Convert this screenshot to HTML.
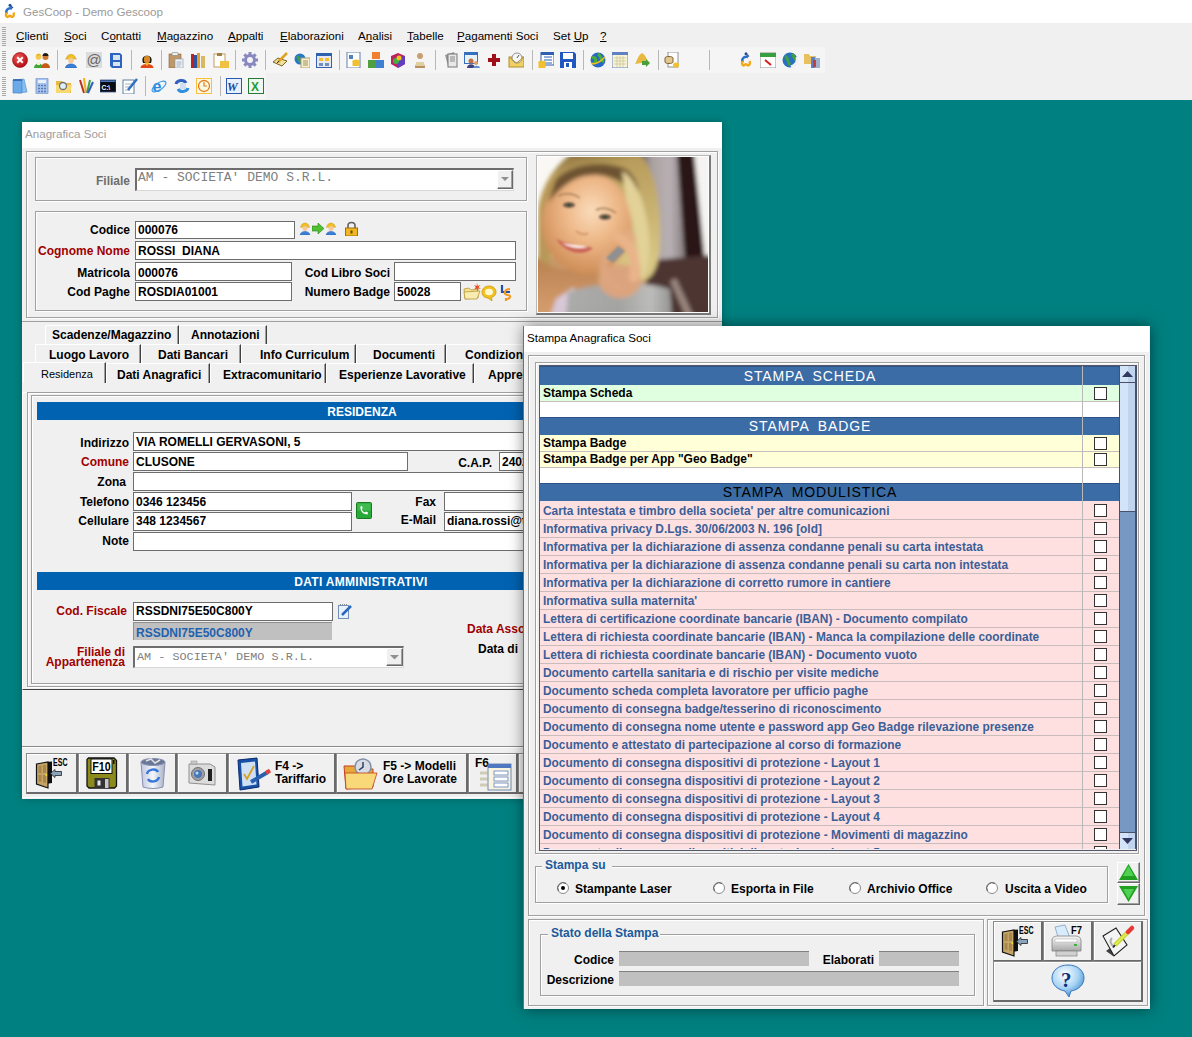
<!DOCTYPE html><html><head><meta charset="utf-8"><style>
html,body{margin:0;padding:0;}
#r{position:relative;width:1192px;height:1037px;overflow:hidden;background:#008080;font-family:'Liberation Sans',sans-serif;}
.a{position:absolute;box-sizing:content-box;}
.t{white-space:pre;}
u{text-decoration:underline;text-underline-offset:1px;}
</style></head><body><div id="r">
<div class="a" style="left:0px;top:0px;width:1192px;height:23px;background:#fff"></div>
<svg class="a" style="left:2px;top:3px" width="16" height="17" viewBox="0 0 16 16"><circle cx="8" cy="1.8" r="1.5" fill="#1f4f9f"/><path d="M8 2 L11 4.5" stroke="#1f4f9f" stroke-width="1.2"/><path d="M10 5 C5 4 3 8 5 10.5" stroke="#2a70c8" stroke-width="2.4" fill="none"/><path d="M4.5 9 C3 12 5 15 7 12.5 C8.5 11 9.5 15 11.5 12.5 C12 11.5 12 10 11.5 9" stroke="#f0a818" stroke-width="2.4" fill="none"/></svg>
<div class="a t" style="left:23px;top:5px;font-size:11.6px;line-height:14px;font-weight:normal;color:#9a9a9a;">GesCoop - Demo Gescoop</div>
<div class="a" style="left:0px;top:23px;width:1192px;height:77px;background:#f0f0f0"></div>
<div class="a" style="left:0px;top:47px;width:825px;height:26px;background:#f5f5f5"></div>
<div class="a" style="left:0px;top:73px;width:266px;height:26px;background:#f5f5f5"></div>
<svg class="a" style="left:2px;top:27px" width="4" height="20" viewBox="0 0 4 20"><rect x="0" y="0" width="4" height="1" fill="#a8a8a8"/><rect x="0" y="2" width="4" height="1" fill="#a8a8a8"/><rect x="0" y="4" width="4" height="1" fill="#a8a8a8"/><rect x="0" y="6" width="4" height="1" fill="#a8a8a8"/><rect x="0" y="8" width="4" height="1" fill="#a8a8a8"/><rect x="0" y="10" width="4" height="1" fill="#a8a8a8"/><rect x="0" y="12" width="4" height="1" fill="#a8a8a8"/><rect x="0" y="14" width="4" height="1" fill="#a8a8a8"/><rect x="0" y="16" width="4" height="1" fill="#a8a8a8"/><rect x="0" y="18" width="4" height="1" fill="#a8a8a8"/></svg>
<svg class="a" style="left:2px;top:51px" width="4" height="20" viewBox="0 0 4 20"><rect x="0" y="0" width="4" height="1" fill="#a8a8a8"/><rect x="0" y="2" width="4" height="1" fill="#a8a8a8"/><rect x="0" y="4" width="4" height="1" fill="#a8a8a8"/><rect x="0" y="6" width="4" height="1" fill="#a8a8a8"/><rect x="0" y="8" width="4" height="1" fill="#a8a8a8"/><rect x="0" y="10" width="4" height="1" fill="#a8a8a8"/><rect x="0" y="12" width="4" height="1" fill="#a8a8a8"/><rect x="0" y="14" width="4" height="1" fill="#a8a8a8"/><rect x="0" y="16" width="4" height="1" fill="#a8a8a8"/><rect x="0" y="18" width="4" height="1" fill="#a8a8a8"/></svg>
<svg class="a" style="left:2px;top:77px" width="4" height="20" viewBox="0 0 4 20"><rect x="0" y="0" width="4" height="1" fill="#a8a8a8"/><rect x="0" y="2" width="4" height="1" fill="#a8a8a8"/><rect x="0" y="4" width="4" height="1" fill="#a8a8a8"/><rect x="0" y="6" width="4" height="1" fill="#a8a8a8"/><rect x="0" y="8" width="4" height="1" fill="#a8a8a8"/><rect x="0" y="10" width="4" height="1" fill="#a8a8a8"/><rect x="0" y="12" width="4" height="1" fill="#a8a8a8"/><rect x="0" y="14" width="4" height="1" fill="#a8a8a8"/><rect x="0" y="16" width="4" height="1" fill="#a8a8a8"/><rect x="0" y="18" width="4" height="1" fill="#a8a8a8"/></svg>
<div class="a t" style="left:16px;top:29px;font-size:11.6px;line-height:14px;font-weight:normal;color:#000;"><u>C</u>lienti</div>
<div class="a t" style="left:64px;top:29px;font-size:11.6px;line-height:14px;font-weight:normal;color:#000;"><u>S</u>oci</div>
<div class="a t" style="left:101px;top:29px;font-size:11.6px;line-height:14px;font-weight:normal;color:#000;">C<u>o</u>ntatti</div>
<div class="a t" style="left:157px;top:29px;font-size:11.6px;line-height:14px;font-weight:normal;color:#000;"><u>M</u>agazzino</div>
<div class="a t" style="left:228px;top:29px;font-size:11.6px;line-height:14px;font-weight:normal;color:#000;"><u>A</u>ppalti</div>
<div class="a t" style="left:280px;top:29px;font-size:11.6px;line-height:14px;font-weight:normal;color:#000;"><u>E</u>laborazioni</div>
<div class="a t" style="left:358px;top:29px;font-size:11.6px;line-height:14px;font-weight:normal;color:#000;">A<u>n</u>alisi</div>
<div class="a t" style="left:407px;top:29px;font-size:11.6px;line-height:14px;font-weight:normal;color:#000;"><u>T</u>abelle</div>
<div class="a t" style="left:457px;top:29px;font-size:11.6px;line-height:14px;font-weight:normal;color:#000;"><u>P</u>agamenti Soci</div>
<div class="a t" style="left:553px;top:29px;font-size:11.6px;line-height:14px;font-weight:normal;color:#000;">Set <u>U</u>p</div>
<div class="a t" style="left:600px;top:29px;font-size:11.6px;line-height:14px;font-weight:normal;color:#000;"><u>?</u></div>
<svg class="a" style="left:12px;top:52px" width="16" height="16" viewBox="0 0 16 16"><defs><radialGradient id="rc" cx=".4" cy=".35" r=".7"><stop offset="0" stop-color="#f05858"/><stop offset="1" stop-color="#b00810"/></radialGradient></defs><circle cx="8" cy="8" r="7.5" fill="url(#rc)" stroke="#900" stroke-width=".6"/><path d="M5.2 5.2 L10.8 10.8 M10.8 5.2 L5.2 10.8" stroke="#fff" stroke-width="2"/></svg>
<svg class="a" style="left:34px;top:52px" width="16" height="16" viewBox="0 0 16 16"><circle cx="4.5" cy="5" r="2.8" fill="#f4c850"/><path d="M2 3.5 C2 1 7 1 7 3.5Z" fill="#f0b020"/><path d="M0 16 C0 10 9 10 9 16Z" fill="#40a838"/><rect x="3" y="10" width="3" height="3" fill="#f8f0d0"/><circle cx="11.5" cy="5" r="3" fill="#d07830"/><path d="M8.5 4 C8.5 0 14.5 0 14.5 4Z" fill="#201810"/><path d="M7 16 C7 9.5 16 9.5 16 16Z" fill="#c85818"/></svg>
<div class="a" style="left:57px;top:50px;width:1px;height:20px;background:#b8b8b8"></div>
<svg class="a" style="left:63px;top:52px" width="16" height="16" viewBox="0 0 16 16"><path d="M3.5 6.5 C3.5 1 12.5 1 12.5 6.5 L13.5 7 L2.5 7Z" fill="#f0c020" stroke="#c09010" stroke-width=".5"/><circle cx="8" cy="8.5" r="2.8" fill="#f6c898"/><path d="M2.5 16 C2.5 10.5 13.5 10.5 13.5 16Z" fill="#3a80d8" stroke="#2050a0" stroke-width=".5"/></svg>
<svg class="a" style="left:86px;top:52px" width="16" height="16" viewBox="0 0 16 16"><rect x="0" y="0" width="16" height="16" fill="#dcdcdc"/><text x="0.5" y="13" font-family="Liberation Sans" font-size="15" fill="#686868">@</text></svg>
<svg class="a" style="left:108px;top:52px" width="16" height="16" viewBox="0 0 16 16"><path d="M2 1 L12 1 L14 3 L14 16 L4 16 L2 14Z" fill="#2c64c0"/><rect x="5" y="3" width="7" height="5" fill="#d8e4f4"/><rect x="5" y="10" width="7" height="4" fill="#d8e4f4"/></svg>
<div class="a" style="left:131px;top:50px;width:1px;height:20px;background:#b8b8b8"></div>
<svg class="a" style="left:139px;top:52px" width="16" height="16" viewBox="0 0 16 16"><path d="M3.5 9 C2 2 14 2 12.5 9 L12 11 L4 11Z" fill="#181410"/><ellipse cx="8" cy="7.5" rx="3.2" ry="3.8" fill="#d88a28"/><path d="M1.5 16 C1.5 10.5 14.5 10.5 14.5 16Z" fill="#e04818"/><path d="M5.5 11 L8 14 L10.5 11Z" fill="#f8c020"/></svg>
<div class="a" style="left:161px;top:50px;width:1px;height:20px;background:#b8b8b8"></div>
<svg class="a" style="left:168px;top:52px" width="16" height="16" viewBox="0 0 16 16"><rect x="1" y="2" width="12" height="14" fill="#c09868" stroke="#806040" stroke-width=".6"/><rect x="4" y="0.5" width="6" height="3" rx="1" fill="#f0f0f0" stroke="#808080" stroke-width=".6"/><rect x="7" y="7" width="8" height="9" fill="#eef4f8" stroke="#8090a0" stroke-width=".6"/><path d="M8.5 10h5M8.5 12h5M8.5 14h4" stroke="#90a0b0" stroke-width=".8"/></svg>
<svg class="a" style="left:190px;top:52px" width="16" height="16" viewBox="0 0 16 16"><rect x="1" y="2" width="3" height="14" fill="#c02020"/><rect x="4" y="3" width="3" height="13" fill="#3050a0"/><rect x="7" y="1" width="3" height="15" fill="#e0a030"/><rect x="11" y="4" width="4" height="12" fill="#d8b860"/></svg>
<svg class="a" style="left:213px;top:52px" width="16" height="16" viewBox="0 0 16 16"><rect x="1" y="2" width="11" height="13" fill="#fff" stroke="#c0a060"/><rect x="4" y="1" width="5" height="3" fill="#a08040"/><rect x="7" y="9" width="9" height="7" fill="#f0c040"/></svg>
<div class="a" style="left:235px;top:50px;width:1px;height:20px;background:#b8b8b8"></div>
<svg class="a" style="left:242px;top:52px" width="16" height="16" viewBox="0 0 16 16"><g fill="#8a88c0"><circle cx="8" cy="8" r="6"/><rect x="6.5" y="0" width="3" height="16"/><rect x="0" y="6.5" width="16" height="3"/><rect x="6.5" y="0" width="3" height="16" transform="rotate(45 8 8)"/><rect x="6.5" y="0" width="3" height="16" transform="rotate(-45 8 8)"/></g><circle cx="8" cy="8" r="3" fill="#f4f4f4"/></svg>
<div class="a" style="left:265px;top:50px;width:1px;height:20px;background:#b8b8b8"></div>
<svg class="a" style="left:272px;top:52px" width="16" height="16" viewBox="0 0 16 16"><path d="M1 10 L10 14 L15 9 L6 6Z" fill="#f0e0a0" stroke="#806020"/><path d="M6 10 L15 1" stroke="#e0a020" stroke-width="2.5"/><path d="M5 11 L7 9" stroke="#333" stroke-width="1"/></svg>
<svg class="a" style="left:294px;top:52px" width="16" height="16" viewBox="0 0 16 16"><circle cx="6" cy="7" r="5.5" fill="#2878c8"/><path d="M3 4 C6 6 4 9 7 10" stroke="#40a040" stroke-width="2.5" fill="none"/><rect x="7" y="6" width="9" height="10" fill="#f8f0d0" stroke="#b0a070"/><path d="M9 9h5M9 11h5M9 13h5" stroke="#a09060"/></svg>
<svg class="a" style="left:316px;top:52px" width="16" height="16" viewBox="0 0 16 16"><rect x="0" y="1" width="16" height="15" fill="#3060b0"/><rect x="1" y="4" width="14" height="11" fill="#e8e8f0"/><rect x="3" y="6" width="4" height="3" fill="#f0c030"/><rect x="9" y="6" width="4" height="3" fill="#f0c030"/><rect x="3" y="11" width="4" height="3" fill="#7090c0"/><rect x="9" y="11" width="4" height="3" fill="#7090c0"/></svg>
<div class="a" style="left:339px;top:50px;width:1px;height:20px;background:#b8b8b8"></div>
<svg class="a" style="left:346px;top:52px" width="16" height="16" viewBox="0 0 16 16"><rect x="1" y="0" width="13" height="16" fill="#fff" stroke="#6080b0"/><rect x="3" y="3" width="4" height="4" fill="#5080c0"/><ellipse cx="10" cy="9" rx="3.5" ry="1.5" fill="#f0c030"/><rect x="6.5" y="9" width="7" height="5" fill="#f0c030"/></svg>
<svg class="a" style="left:368px;top:52px" width="16" height="16" viewBox="0 0 16 16"><rect x="4" y="0" width="8" height="7" fill="#f08030"/><rect x="0" y="8" width="8" height="8" fill="#50a040"/><rect x="8" y="8" width="8" height="8" fill="#4080d0"/></svg>
<svg class="a" style="left:390px;top:52px" width="16" height="16" viewBox="0 0 16 16"><path d="M1 4 L8 1 L15 4 L15 12 L8 16 L1 12Z" fill="#c02060"/><path d="M8 6 L15 4 L15 12 L8 16Z" fill="#6040c0"/><circle cx="6" cy="9" r="3" fill="#40b040"/><circle cx="9" cy="6" r="2.5" fill="#f0c020"/></svg>
<svg class="a" style="left:412px;top:52px" width="16" height="16" viewBox="0 0 16 16"><circle cx="8" cy="4" r="3" fill="#c8a070"/><path d="M3 16 C3 8 13 8 13 16Z" fill="#b89060"/><rect x="4" y="10" width="8" height="4" fill="#e0d0a0"/></svg>
<div class="a" style="left:435px;top:50px;width:1px;height:20px;background:#b8b8b8"></div>
<svg class="a" style="left:443px;top:52px" width="16" height="16" viewBox="0 0 16 16"><path d="M2 3 L11 0 L14 10 L5 14Z" fill="#9a9a9a"/><rect x="5" y="2" width="9" height="13" fill="#e8e8e8" stroke="#777"/><path d="M7 5h5M7 7h5M7 9h5" stroke="#888"/></svg>
<svg class="a" style="left:464px;top:52px" width="16" height="16" viewBox="0 0 16 16"><rect x="0" y="0" width="14" height="12" fill="#3870c0"/><rect x="1" y="3" width="12" height="8" fill="#e8f0f8"/><circle cx="7" cy="9" r="2.5" fill="#c07040"/><path d="M3 16 C3 11 11 11 11 16Z" fill="#404080"/><circle cx="12" cy="11" r="2" fill="#e0a070"/><path d="M9 16 C9 13 16 13 16 16Z" fill="#6090d0"/></svg>
<svg class="a" style="left:486px;top:52px" width="16" height="16" viewBox="0 0 16 16"><path d="M6 2h4v4h4v4h-4v4h-4v-4h-4v-4h4z" fill="#a01018"/></svg>
<svg class="a" style="left:508px;top:52px" width="16" height="16" viewBox="0 0 16 16"><rect x="1" y="5" width="15" height="10" fill="#f0d060" stroke="#b09030"/><circle cx="9" cy="6" r="5" fill="#f8f8f8" stroke="#909090"/><path d="M9 6 L11 3" stroke="#555"/><path d="M1 5 L8.5 11 L16 5" fill="none" stroke="#b09030"/></svg>
<div class="a" style="left:532px;top:50px;width:1px;height:20px;background:#b8b8b8"></div>
<svg class="a" style="left:538px;top:52px" width="16" height="16" viewBox="0 0 16 16"><rect x="3" y="0" width="13" height="13" fill="#fff" stroke="#3060b0"/><rect x="3" y="0" width="13" height="3" fill="#3060b0"/><path d="M6 5h8M6 8h8M6 11h8" stroke="#3060b0"/><ellipse cx="4" cy="10" rx="3.5" ry="1.5" fill="#f0c030"/><rect x="0.5" y="10" width="7" height="6" fill="#f0c030"/></svg>
<svg class="a" style="left:560px;top:52px" width="16" height="16" viewBox="0 0 16 16"><path d="M0 0 L14 0 L16 2 L16 16 L0 16Z" fill="#2058c0"/><rect x="3" y="1" width="10" height="6" fill="#fff"/><rect x="4" y="10" width="8" height="6" fill="#fff"/><rect x="6" y="11" width="3" height="4" fill="#2058c0"/></svg>
<div class="a" style="left:583px;top:50px;width:1px;height:20px;background:#b8b8b8"></div>
<svg class="a" style="left:590px;top:52px" width="16" height="16" viewBox="0 0 16 16"><circle cx="8" cy="8" r="7.5" fill="#2a68c8"/><path d="M2 6 C6 4 7 9 4 12 M8 2 C12 4 10 8 14 10" stroke="#48b030" stroke-width="3" fill="none"/><path d="M1 11 C6 14 12 8 15 5" stroke="#f0c020" stroke-width="1.5" fill="none"/></svg>
<svg class="a" style="left:612px;top:52px" width="16" height="16" viewBox="0 0 16 16"><rect x="0" y="0" width="16" height="16" fill="#f8f4d8" stroke="#6080c0"/><rect x="0" y="0" width="16" height="3" fill="#6080c0"/><path d="M2 6h12M2 9h12M2 12h12M5 4v11M8 4v11M11 4v11" stroke="#c8c090" stroke-width=".7"/></svg>
<svg class="a" style="left:634px;top:52px" width="16" height="16" viewBox="0 0 16 16"><path d="M1 12 C3 9 4 3 8 1 C12 3 13 8 14 10Z" fill="#e8b840"/><path d="M8 9 L12 9 L12 7 L16 11 L12 15 L12 13 L8 13Z" fill="#48a038"/></svg>
<div class="a" style="left:658px;top:50px;width:1px;height:20px;background:#b8b8b8"></div>
<svg class="a" style="left:664px;top:52px" width="16" height="16" viewBox="0 0 16 16"><rect x="4" y="0" width="10" height="15" fill="#fff" stroke="#909090"/><path d="M1 6 C1 4 9 4 9 6 L9 10 C9 12 1 12 1 10Z" fill="#e0c890" stroke="#806030"/><ellipse cx="12" cy="13" rx="3" ry="2.5" fill="#f0c030"/></svg>
<div class="a" style="left:709px;top:50px;width:1px;height:20px;background:#b8b8b8"></div>
<svg class="a" style="left:738px;top:52px" width="16" height="16" viewBox="0 0 16 16"><circle cx="8" cy="1.8" r="1.5" fill="#1f4f9f"/><path d="M8 2 L11 4.5" stroke="#1f4f9f" stroke-width="1.2"/><path d="M10 5 C5 4 3 8 5 10.5" stroke="#2a70c8" stroke-width="2.4" fill="none"/><path d="M4.5 9 C3 12 5 15 7 12.5 C8.5 11 9.5 15 11.5 12.5 C12 11.5 12 10 11.5 9" stroke="#f0a818" stroke-width="2.4" fill="none"/></svg>
<svg class="a" style="left:760px;top:52px" width="16" height="16" viewBox="0 0 16 16"><rect x="0" y="1" width="16" height="15" fill="#fff" stroke="#909090"/><rect x="0" y="1" width="16" height="4" fill="#38a040"/><path d="M5 8 L11 13" stroke="#d02020" stroke-width="2"/></svg>
<svg class="a" style="left:782px;top:52px" width="16" height="16" viewBox="0 0 16 16"><circle cx="8" cy="8" r="7.5" fill="#2870c0"/><path d="M3 4 C7 6 5 10 8 13 M10 2 C13 5 11 7 15 8" stroke="#40a040" stroke-width="3" fill="none"/><path d="M9 15 C14 13 16 9 15 5" stroke="#f0f0f0" stroke-width="3" fill="none"/></svg>
<svg class="a" style="left:804px;top:52px" width="16" height="16" viewBox="0 0 16 16"><path d="M0 2 L5 2 L6 4 L12 4 L12 12 L0 12Z" fill="#e8c060"/><rect x="7" y="5" width="4" height="11" fill="#6080c0"/><rect x="11" y="6" width="5" height="10" fill="#a0b0d0"/><rect x="9" y="8" width="3" height="7" fill="#c04040"/></svg>
<svg class="a" style="left:12px;top:78px" width="16" height="16" viewBox="0 0 16 16"><path d="M3 2 L12 1 L15 14 L6 15Z" fill="#88c0f0" stroke="#4a88c8" stroke-width=".6"/><path d="M1 2 L10 2 L10 15 L1 15Z" fill="#6aaae8" stroke="#3a78c0" stroke-width=".6"/><path d="M1 2h9" stroke="#2a60a8" stroke-width="1.5"/></svg>
<svg class="a" style="left:34px;top:78px" width="16" height="16" viewBox="0 0 16 16"><rect x="2" y="0" width="12" height="16" rx="1" fill="#a8c4ec" stroke="#6888c0" stroke-width=".7"/><rect x="4" y="2" width="8" height="3" fill="#e8f0fc"/><path d="M4 7.5h2M7 7.5h2M10 7.5h2M4 10.5h2M7 10.5h2M10 10.5h2M4 13.5h2M7 13.5h2M10 13.5h2" stroke="#5878b8" stroke-width="1.3"/></svg>
<svg class="a" style="left:56px;top:78px" width="16" height="16" viewBox="0 0 16 16"><path d="M0 3 L6 3 L7 5 L15 5 L15 15 L0 15Z" fill="#e8b840"/><path d="M0 7 L16 7 L14 15 L0 15Z" fill="#f8d870"/><circle cx="7" cy="8" r="3.5" fill="#e0f0f8" stroke="#707070" stroke-width="1.3"/></svg>
<svg class="a" style="left:78px;top:78px" width="16" height="16" viewBox="0 0 16 16"><path d="M2 2 L6 15" stroke="#c03020" stroke-width="2"/><path d="M6 0 L8 15" stroke="#f0b020" stroke-width="2"/><path d="M12 2 L9 15" stroke="#40a040" stroke-width="2"/><path d="M15 4 L10 15" stroke="#3060c0" stroke-width="2"/></svg>
<svg class="a" style="left:100px;top:78px" width="16" height="16" viewBox="0 0 16 16"><rect x="0" y="2" width="16" height="12" fill="#0a0a14" stroke="#3a5888" stroke-width=".8"/><rect x="0.5" y="2.5" width="15" height="1.5" fill="#4a78c0"/><text x="1.5" y="11.5" font-family="Liberation Sans" font-weight="bold" font-size="6.5" fill="#ffffff">C:\</text></svg>
<svg class="a" style="left:122px;top:78px" width="16" height="16" viewBox="0 0 16 16"><rect x="1" y="2" width="11" height="14" fill="#fff" stroke="#6080a0"/><path d="M3 6h7M3 9h7M3 12h5" stroke="#a0b0c0"/><path d="M6 12 L15 1" stroke="#3070c0" stroke-width="2.5"/></svg>
<div class="a" style="left:145px;top:76px;width:1px;height:20px;background:#b8b8b8"></div>
<svg class="a" style="left:151px;top:78px" width="16" height="16" viewBox="0 0 16 16"><text x="1.5" y="14" font-family="Liberation Sans" font-weight="bold" font-size="16" fill="#2a88e0">e</text><ellipse cx="8" cy="8.5" rx="8" ry="3.5" transform="rotate(-35 8 8.5)" fill="none" stroke="#3a98e8" stroke-width="1.2"/></svg>
<svg class="a" style="left:174px;top:78px" width="16" height="16" viewBox="0 0 16 16"><path d="M2 6 C3 2 10 1 12 5" stroke="#3060c0" stroke-width="3" fill="none"/><path d="M14 10 C13 14 6 15 4 11" stroke="#3090e0" stroke-width="3" fill="none"/><rect x="6" y="5" width="6" height="6" fill="#d0e0f0"/></svg>
<svg class="a" style="left:196px;top:78px" width="16" height="16" viewBox="0 0 16 16"><rect x="0" y="0" width="16" height="16" fill="#f8c040"/><rect x="1" y="1" width="14" height="14" fill="#fff8e0"/><circle cx="8" cy="8" r="5.5" fill="none" stroke="#e08020" stroke-width="1.3"/><path d="M8 4v4h3" stroke="#e08020" stroke-width="1.2" fill="none"/></svg>
<div class="a" style="left:220px;top:76px;width:1px;height:20px;background:#b8b8b8"></div>
<svg class="a" style="left:226px;top:78px" width="16" height="16" viewBox="0 0 16 16"><rect x="0.5" y="0.5" width="15" height="15" fill="#e8f0fc" stroke="#2858b0"/><text x="1" y="13" font-family="Liberation Serif" font-style="italic" font-weight="bold" font-size="12" fill="#1a48a0">W</text></svg>
<svg class="a" style="left:248px;top:78px" width="16" height="16" viewBox="0 0 16 16"><rect x="0.5" y="0.5" width="15" height="15" fill="#eef8ee" stroke="#287838"/><text x="3" y="13" font-family="Liberation Sans" font-weight="bold" font-size="12" fill="#289838">X</text></svg>
<div class="a" style="left:22px;top:122px;width:700px;height:677px;background:#f0f0f0;box-shadow:0 0 8px rgba(0,0,0,.25)"></div>
<div class="a" style="left:22px;top:122px;width:700px;height:26px;background:#fff"></div>
<div class="a t" style="left:25px;top:127px;font-size:11.6px;line-height:14px;font-weight:normal;color:#9d9d9d;">Anagrafica Soci</div>
<div class="a" style="left:26px;top:151px;width:690px;height:165px;border:1px solid #a0a0a0;box-shadow:inset 1px 1px 0 #fff,1px 1px 0 #fff;"></div>
<div class="a" style="left:22px;top:321px;width:700px;height:1px;background:#a0a0a0"></div>
<div class="a" style="left:35px;top:157px;width:490px;height:42px;border:1px solid #a0a0a0;box-shadow:inset 1px 1px 0 #fff,1px 1px 0 #fff;"></div>
<div class="a t" style="right:1062px;top:174px;font-size:12px;line-height:14px;font-weight:bold;color:#6d6d6d;">Filiale</div>
<div class="a" style="left:135px;top:168px;width:376px;height:20px;background:#fff;border-top:2px solid #6d6d6d;border-left:2px solid #6d6d6d;border-right:1px solid #d8d8d8;border-bottom:1px solid #d8d8d8"></div>
<div class="a" style="left:497px;top:170px;width:14px;height:17px;background:#f0f0f0;border-top:1px solid #fff;border-left:1px solid #fff;border-right:1px solid #696969;border-bottom:1px solid #696969;box-shadow:inset -1px -1px 0 #a0a0a0;"></div>
<svg class="a" style="left:501px;top:177px" width="8" height="5" viewBox="0 0 8 5"><path d="M0 0 L8 0 L4 4Z" fill="#909090"/></svg>
<div class="a t" style="left:138px;top:170px;font-size:13px;line-height:16px;font-weight:normal;color:#808080;font-family:'Liberation Mono',monospace;">AM - SOCIETA' DEMO S.R.L.</div>
<div class="a" style="left:536px;top:155px;width:172px;height:157px;border:1px solid #b8b8b8;border-right:2px solid #7a7a7a;border-bottom:2px solid #7a7a7a;background:#fff"></div>
<svg class="a" style="left:538px;top:157px" width="170" height="155" viewBox="0 0 170 155"><defs><filter id="bl" x="-10%" y="-10%" width="120%" height="120%"><feGaussianBlur stdDeviation="2"/></filter>
<filter id="bl2" x="-20%" y="-20%" width="140%" height="140%"><feGaussianBlur stdDeviation="1"/></filter>
<radialGradient id="face" cx="0.55" cy="0.38" r="0.65"><stop offset="0" stop-color="#fadcbc"/><stop offset="0.45" stop-color="#eeb888"/><stop offset="1" stop-color="#cc8a54"/></radialGradient>
<linearGradient id="bgg" x1="0" y1="0" x2="1" y2="0"><stop offset="0" stop-color="#5a4a48"/><stop offset="0.3" stop-color="#aaa2a2"/><stop offset="0.7" stop-color="#b8b0b2"/><stop offset="1" stop-color="#8a8084"/></linearGradient>
<linearGradient id="hair" x1="0" y1="0" x2="0.2" y2="1"><stop offset="0" stop-color="#7a6034"/><stop offset="0.2" stop-color="#b89c5c"/><stop offset="1" stop-color="#d8c684"/></linearGradient>
<linearGradient id="jk" x1="0" y1="0" x2="1" y2="0"><stop offset="0" stop-color="#acacaa"/><stop offset="0.5" stop-color="#a4a4a2"/><stop offset="0.8" stop-color="#bcbcba"/><stop offset="1" stop-color="#949492"/></linearGradient>
<linearGradient id="neck" x1="0" y1="0" x2="0" y2="1"><stop offset="0" stop-color="#b88050"/><stop offset="1" stop-color="#d8a070"/></linearGradient>
</defs>
<rect width="170" height="155" fill="#faf8f4"/>
<g filter="url(#bl)">
<rect x="100" y="-5" width="60" height="115" fill="#aca4a6"/>
<rect x="100" y="-5" width="46" height="115" fill="url(#bgg)"/><path d="M139 -5 L157 -5 L168 105 L174 130 L152 130 L147 105Z" fill="#2a1812"/>
<path d="M156 -5 L178 -5 L178 104 L167 104Z" fill="#f6f4f2"/>
<path d="M102 104 L175 98 L175 160 L108 160Z" fill="#4e3430"/>
<rect x="0" y="60" width="108" height="100" fill="#c89868"/>
<path d="M132 124 L138 121 L156 160 L148 160Z" fill="#b8a8a0" opacity=".7"/>
<path d="M0 52 C4 26 18 8 34 -4 L100 -4 C118 10 124 50 122 90 C120 112 114 122 104 124 L80 118 L60 60 L0 112Z" fill="url(#hair)"/>
<path d="M0 70 C0 46 6 28 16 18 L12 110 L0 112Z" fill="#b89858"/>
<path d="M-5 98 C10 112 35 118 58 110 L64 160 L-5 160Z" fill="url(#neck)"/>
<ellipse cx="49" cy="66" rx="45" ry="51" fill="url(#face)"/>
<path d="M18 142 L36 130 L42 160 L12 160Z" fill="#d8c8d8"/>
<path d="M30 135 C55 126 100 122 132 132 L134 160 L28 160Z" fill="url(#jk)"/>
<ellipse cx="82" cy="124" rx="21" ry="17" fill="#dca47e"/>
<path d="M96 120 C100 102 94 88 80 80" stroke="#eab48a" stroke-width="10" stroke-linecap="round" fill="none"/>
<path d="M104 112 C108 96 102 84 90 76" stroke="#e2aa82" stroke-width="7" stroke-linecap="round" fill="none"/>
<path d="M78 130 C66 124 62 112 68 100" stroke="#dea67e" stroke-width="8" stroke-linecap="round" fill="none"/>
<path d="M18 22 C32 8 64 2 88 12 C98 20 102 30 100 42 C92 28 76 18 56 18 C38 18 24 28 10 46Z" fill="#6e5230"/>
<path d="M84 14 C96 20 106 42 110 70 C114 95 110 115 104 122 C100 100 98 72 88 42Z" fill="#e2d298"/>
</g>
<g filter="url(#bl2)">
<path d="M68 101 L80 89 L87 94 L75 106Z" fill="#909090"/>
<ellipse cx="31" cy="48" rx="6" ry="2.8" fill="#6a5a48"/>
<ellipse cx="67" cy="60" rx="6" ry="2.8" fill="#6a5a48"/>
<circle cx="31" cy="48" r="1.8" fill="#304030"/>
<circle cx="67" cy="60" r="1.8" fill="#304030"/>
<path d="M20 39 C28 35 36 37 42 41" stroke="#a88058" stroke-width="1.5" fill="none"/>
<path d="M58 53 C64 50 72 51 78 56" stroke="#a88058" stroke-width="1.5" fill="none"/>
<path d="M18 82 C28 97 46 100 55 91 C46 88 30 88 18 82Z" fill="#cc6858"/>
<path d="M24 86 C32 91 42 92 50 90 C42 88 32 88 24 86Z" fill="#fff4f0"/>
<path d="M38 74 C42 78 48 78 50 76" stroke="#c88a60" stroke-width="1.3" fill="none"/>
</g></svg>
<div class="a" style="left:35px;top:211px;width:490px;height:98px;border:1px solid #a0a0a0;box-shadow:inset 1px 1px 0 #fff,1px 1px 0 #fff;"></div>
<div class="a" style="left:135px;top:221px;width:158px;height:16px;background:#fff;border:1px solid #6d6d6d;"></div>
<div class="a t" style="right:1062px;top:223px;font-size:12px;line-height:14px;font-weight:bold;color:#000;">Codice</div>
<div class="a t" style="left:138px;top:223px;font-size:12px;line-height:14px;font-weight:bold;color:#000;">000076</div>
<div class="a" style="left:135px;top:241px;width:379px;height:17px;background:#fff;border:1px solid #6d6d6d;"></div>
<div class="a t" style="right:1062px;top:244px;font-size:12px;line-height:14px;font-weight:bold;color:#a00000;">Cognome Nome</div>
<div class="a t" style="left:138px;top:244px;font-size:12px;line-height:14px;font-weight:bold;color:#000;">ROSSI  DIANA</div>
<div class="a" style="left:135px;top:262px;width:155px;height:17px;background:#fff;border:1px solid #6d6d6d;"></div>
<div class="a t" style="right:1062px;top:266px;font-size:12px;line-height:14px;font-weight:bold;color:#000;">Matricola</div>
<div class="a t" style="left:138px;top:266px;font-size:12px;line-height:14px;font-weight:bold;color:#000;">000076</div>
<div class="a" style="left:135px;top:282px;width:155px;height:17px;background:#fff;border:1px solid #6d6d6d;"></div>
<div class="a t" style="right:1062px;top:285px;font-size:12px;line-height:14px;font-weight:bold;color:#000;">Cod Paghe</div>
<div class="a t" style="left:138px;top:285px;font-size:12px;line-height:14px;font-weight:bold;color:#000;">ROSDIA01001</div>
<div class="a" style="left:394px;top:262px;width:120px;height:17px;background:#fff;border:1px solid #6d6d6d;"></div>
<div class="a t" style="right:802px;top:266px;font-size:12px;line-height:14px;font-weight:bold;color:#000;">Cod Libro Soci</div>
<div class="a" style="left:394px;top:282px;width:65px;height:17px;background:#fff;border:1px solid #6d6d6d;"></div>
<div class="a t" style="right:802px;top:285px;font-size:12px;line-height:14px;font-weight:bold;color:#000;">Numero Badge</div>
<div class="a t" style="left:397px;top:285px;font-size:12px;line-height:14px;font-weight:bold;color:#000;">50028</div>
<svg class="a" style="left:298px;top:221px" width="14" height="14" viewBox="0 0 16 16"><path d="M3.5 6.5 C3.5 1 12.5 1 12.5 6.5 L13.5 7 L2.5 7Z" fill="#f0c020" stroke="#c09010" stroke-width=".5"/><circle cx="8" cy="8.5" r="2.8" fill="#f6c898"/><path d="M2.5 16 C2.5 10.5 13.5 10.5 13.5 16Z" fill="#3a80d8" stroke="#2050a0" stroke-width=".5"/></svg>
<svg class="a" style="left:312px;top:223px" width="12" height="11" viewBox="0 0 12 11"><path d="M0 3h6v-3l6 5.5-6 5.5v-3h-6z" fill="#50c030" stroke="#308020" stroke-width=".6"/></svg>
<svg class="a" style="left:324px;top:221px" width="14" height="14" viewBox="0 0 16 16"><path d="M3.5 6.5 C3.5 1 12.5 1 12.5 6.5 L13.5 7 L2.5 7Z" fill="#f0c020" stroke="#c09010" stroke-width=".5"/><circle cx="8" cy="8.5" r="2.8" fill="#f6c898"/><path d="M2.5 16 C2.5 10.5 13.5 10.5 13.5 16Z" fill="#3a80d8" stroke="#2050a0" stroke-width=".5"/></svg>
<svg class="a" style="left:345px;top:221px" width="13" height="15" viewBox="0 0 13 15"><path d="M3 7 V4.5 C3 0.5 10 0.5 10 4.5 V7" stroke="#606060" stroke-width="1.6" fill="none"/><rect x="0.5" y="7" width="12" height="8" fill="#f0b820" stroke="#a07010"/><rect x="5.5" y="9.5" width="2" height="3" fill="#704000"/></svg>
<svg class="a" style="left:463px;top:283px" width="18" height="17" viewBox="0 0 18 17"><path d="M1 6 L6 5 L8 7 L15 6 L15 15 L2 16Z" fill="#f4e090" stroke="#b89838" stroke-width=".8"/><path d="M1 9 L17 8 L14 16 L2 16Z" fill="#f8ecb0" stroke="#b89838" stroke-width=".8"/><path d="M14 0 L14.8 3 L17.5 2 L15.5 4.2 L18 6 L15 5.6 L14.5 8.5 L13.5 5.6 L11 6.5 L12.8 4.2 L11 2 L13.6 3Z" fill="#f04818"/></svg>
<svg class="a" style="left:481px;top:285px" width="16" height="16" viewBox="0 0 16 16"><path d="M8 1 C3.5 1 1 4 1 7.5 C1 10.5 3.5 13 7 13 L11 16 L10.5 12.5 C13.5 11.5 15 9.5 15 7 C15 3.5 12 1 8 1Z" fill="#f0c020" stroke="#d09808" stroke-width=".8"/><ellipse cx="8" cy="7" rx="4" ry="3.2" fill="#fff8d0"/></svg>
<svg class="a" style="left:499px;top:284px" width="14" height="17" viewBox="0 0 14 17"><path d="M3 1 V8 H11" stroke="#2050b0" stroke-width="2.2" fill="none"/><path d="M11 5 C5 5 4 11 9 11 C12 11 12 15 7 15 V17" stroke="#f09820" stroke-width="2.2" fill="none"/></svg>
<div class="a" style="left:45px;top:325px;width:132px;height:19px;border-left:1px solid #fff;border-top:1px solid #fff;border-right:1px solid #404040;border-top-left-radius:2px;box-shadow:inset -1px 0 0 #a0a0a0"></div>
<div class="a t" style="left:52px;top:328px;font-size:12px;line-height:14px;font-weight:bold;color:#000;">Scadenze/Magazzino</div>
<div class="a" style="left:179px;top:325px;width:86px;height:19px;border-left:1px solid #fff;border-top:1px solid #fff;border-right:1px solid #404040;border-top-left-radius:2px;box-shadow:inset -1px 0 0 #a0a0a0"></div>
<div class="a t" style="left:191px;top:328px;font-size:12px;line-height:14px;font-weight:bold;color:#000;">Annotazioni</div>
<div class="a" style="left:35px;top:344px;width:104px;height:19px;border-left:1px solid #fff;border-top:1px solid #fff;border-right:1px solid #404040;border-top-left-radius:2px;box-shadow:inset -1px 0 0 #a0a0a0"></div>
<div class="a t" style="left:49px;top:348px;font-size:12px;line-height:14px;font-weight:bold;color:#000;">Luogo Lavoro</div>
<div class="a" style="left:141px;top:344px;width:98px;height:19px;border-left:1px solid #fff;border-top:1px solid #fff;border-right:1px solid #404040;border-top-left-radius:2px;box-shadow:inset -1px 0 0 #a0a0a0"></div>
<div class="a t" style="left:158px;top:348px;font-size:12px;line-height:14px;font-weight:bold;color:#000;">Dati Bancari</div>
<div class="a" style="left:241px;top:344px;width:113px;height:19px;border-left:1px solid #fff;border-top:1px solid #fff;border-right:1px solid #404040;border-top-left-radius:2px;box-shadow:inset -1px 0 0 #a0a0a0"></div>
<div class="a t" style="left:260px;top:348px;font-size:12px;line-height:14px;font-weight:bold;color:#000;">Info Curriculum</div>
<div class="a" style="left:356px;top:344px;width:88px;height:19px;border-left:1px solid #fff;border-top:1px solid #fff;border-right:1px solid #404040;border-top-left-radius:2px;box-shadow:inset -1px 0 0 #a0a0a0"></div>
<div class="a t" style="left:373px;top:348px;font-size:12px;line-height:14px;font-weight:bold;color:#000;">Documenti</div>
<div class="a" style="left:446px;top:344px;width:112px;height:19px;border-left:1px solid #fff;border-top:1px solid #fff;border-right:1px solid #404040;border-top-left-radius:2px;box-shadow:inset -1px 0 0 #a0a0a0"></div>
<div class="a t" style="left:465px;top:348px;font-size:12px;line-height:14px;font-weight:bold;color:#000;">Condizioni</div>
<div class="a" style="left:106px;top:363px;width:102px;height:19px;border-left:1px solid #fff;border-top:1px solid #fff;border-right:1px solid #404040;border-top-left-radius:2px;box-shadow:inset -1px 0 0 #a0a0a0"></div>
<div class="a t" style="left:117px;top:368px;font-size:12px;line-height:14px;font-weight:bold;color:#000;">Dati Anagrafici</div>
<div class="a" style="left:210px;top:363px;width:114px;height:19px;border-left:1px solid #fff;border-top:1px solid #fff;border-right:1px solid #404040;border-top-left-radius:2px;box-shadow:inset -1px 0 0 #a0a0a0"></div>
<div class="a t" style="left:223px;top:368px;font-size:12px;line-height:14px;font-weight:bold;color:#000;">Extracomunitario</div>
<div class="a" style="left:326px;top:363px;width:146px;height:19px;border-left:1px solid #fff;border-top:1px solid #fff;border-right:1px solid #404040;border-top-left-radius:2px;box-shadow:inset -1px 0 0 #a0a0a0"></div>
<div class="a t" style="left:339px;top:368px;font-size:12px;line-height:14px;font-weight:bold;color:#000;">Esperienze Lavorative</div>
<div class="a" style="left:474px;top:363px;width:124px;height:19px;border-left:1px solid #fff;border-top:1px solid #fff;border-right:1px solid #404040;border-top-left-radius:2px;box-shadow:inset -1px 0 0 #a0a0a0"></div>
<div class="a t" style="left:488px;top:368px;font-size:12px;line-height:14px;font-weight:bold;color:#000;">Apprendistato</div>
<div class="a" style="left:23px;top:362px;width:81px;height:20px;background:#f0f0f0;border-left:1px solid #fff;border-top:1px solid #fff;border-right:1px solid #404040;border-top-left-radius:2px;box-shadow:inset -1px 0 0 #a0a0a0"></div>
<div class="a t" style="left:41px;top:368px;font-size:11px;line-height:13px;font-weight:normal;color:#000;">Residenza</div>
<div class="a" style="left:22px;top:392px;width:698px;height:296px;border-top:1px solid #fff;border-left:1px solid #fff;border-right:1px solid #404040;border-bottom:1px solid #404040;"></div>
<div class="a" style="left:106px;top:392px;width:616px;height:1px;background:#fff"></div>
<div class="a" style="left:27px;top:392px;width:692px;height:293px;border:1px solid #a0a0a0;box-shadow:inset 1px 1px 0 #fff,1px 1px 0 #fff;"></div>
<div class="a" style="left:31px;top:395px;width:684px;height:287px;border:1px solid #a0a0a0;box-shadow:inset 1px 1px 0 #fff,1px 1px 0 #fff;"></div>
<div class="a" style="left:37px;top:402px;width:650px;height:18px;background:#0062b1"></div>
<div class="a t" style="left:62px;width:600px;text-align:center;top:405px;font-size:12px;line-height:14px;font-weight:bold;color:#fff;">RESIDENZA</div>
<div class="a" style="left:133px;top:432px;width:418px;height:17px;background:#fff;border:1px solid #6d6d6d;"></div>
<div class="a t" style="right:1063px;top:436px;font-size:12px;line-height:14px;font-weight:bold;color:#000;">Indirizzo</div>
<div class="a t" style="left:136px;top:435px;font-size:12px;line-height:14px;font-weight:bold;color:#000;">VIA ROMELLI GERVASONI, 5</div>
<div class="a" style="left:133px;top:452px;width:273px;height:17px;background:#fff;border:1px solid #6d6d6d;"></div>
<div class="a t" style="right:1063px;top:455px;font-size:12px;line-height:14px;font-weight:bold;color:#a00000;">Comune</div>
<div class="a t" style="left:136px;top:455px;font-size:12px;line-height:14px;font-weight:bold;color:#000;">CLUSONE</div>
<div class="a t" style="right:700px;top:456px;font-size:12px;line-height:14px;font-weight:bold;color:#000;">C.A.P.</div>
<div class="a" style="left:499px;top:452px;width:58px;height:17px;background:#fff;border:1px solid #6d6d6d;"></div>
<div class="a t" style="left:502px;top:455px;font-size:12px;line-height:14px;font-weight:bold;color:#000;">24023</div>
<div class="a" style="left:133px;top:472px;width:418px;height:17px;background:#fff;border:1px solid #6d6d6d;"></div>
<div class="a t" style="right:1066px;top:475px;font-size:12px;line-height:14px;font-weight:bold;color:#000;">Zona</div>
<div class="a" style="left:133px;top:492px;width:217px;height:17px;background:#fff;border:1px solid #6d6d6d;"></div>
<div class="a t" style="right:1063px;top:495px;font-size:12px;line-height:14px;font-weight:bold;color:#000;">Telefono</div>
<div class="a t" style="left:136px;top:495px;font-size:12px;line-height:14px;font-weight:bold;color:#000;">0346 123456</div>
<div class="a" style="left:133px;top:512px;width:217px;height:17px;background:#fff;border:1px solid #6d6d6d;"></div>
<div class="a t" style="right:1063px;top:514px;font-size:12px;line-height:14px;font-weight:bold;color:#000;">Cellulare</div>
<div class="a t" style="left:136px;top:514px;font-size:12px;line-height:14px;font-weight:bold;color:#000;">348 1234567</div>
<svg class="a" style="left:356px;top:502px" width="16" height="17" viewBox="0 0 16 17"><rect x="0.5" y="0.5" width="15" height="16" rx="1" fill="#28a838" stroke="#1a7a20"/><rect x="1.5" y="1.5" width="13" height="7" fill="#50c860" opacity=".6"/><path d="M4.5 4.5 C4 9 7 12.5 11.5 12.5 L12 10.5 L10 9.5 L9 10.5 C7.5 10 6 8.5 5.8 7 L6.8 6 L5.8 4Z" fill="#fff"/></svg>
<div class="a t" style="right:756px;top:495px;font-size:12px;line-height:14px;font-weight:bold;color:#000;">Fax</div>
<div class="a" style="left:444px;top:492px;width:118px;height:17px;background:#fff;border:1px solid #6d6d6d;"></div>
<div class="a t" style="right:756px;top:513px;font-size:12px;line-height:14px;font-weight:bold;color:#000;">E-Mail</div>
<div class="a" style="left:444px;top:512px;width:118px;height:17px;background:#fff;border:1px solid #6d6d6d;"></div>
<div class="a t" style="left:447px;top:514px;font-size:12px;line-height:14px;font-weight:bold;color:#000;">diana.rossi@tiscali.it</div>
<div class="a" style="left:133px;top:532px;width:418px;height:17px;background:#fff;border:1px solid #6d6d6d;"></div>
<div class="a t" style="right:1063px;top:534px;font-size:12px;line-height:14px;font-weight:bold;color:#000;">Note</div>
<div class="a" style="left:37px;top:572px;width:650px;height:18px;background:#0062b1"></div>
<div class="a t" style="left:61px;width:600px;text-align:center;top:575px;font-size:12px;line-height:14px;font-weight:bold;color:#fff;letter-spacing:0.3px;">DATI AMMINISTRATIVI</div>
<div class="a t" style="right:1065px;top:604px;font-size:12px;line-height:14px;font-weight:bold;color:#a00000;">Cod. Fiscale</div>
<div class="a" style="left:133px;top:602px;width:198px;height:17px;background:#fff;border:1px solid #6d6d6d;"></div>
<div class="a t" style="left:136px;top:604px;font-size:12px;line-height:14px;font-weight:bold;color:#000;">RSSDNI75E50C800Y</div>
<div class="a" style="left:133px;top:622px;width:199px;height:18px;background:#c0c0c0;border-top:1px solid #909090;border-left:1px solid #909090;box-sizing:border-box"></div>
<div class="a t" style="left:136px;top:626px;font-size:12px;line-height:14px;font-weight:bold;color:#1f62b0;">RSSDNI75E50C800Y</div>
<svg class="a" style="left:338px;top:603px" width="14" height="16" viewBox="0 0 14 16"><rect x="0.5" y="2.5" width="10" height="13" fill="#e8f0fa" stroke="#7090b8"/><path d="M2 1.5 h7" stroke="#909090" stroke-dasharray="1 1"/><path d="M4 12 L13 3" stroke="#2a68c0" stroke-width="2.5"/></svg>
<div class="a t" style="right:1067px;top:645px;font-size:12px;line-height:14px;font-weight:bold;color:#a00000;">Filiale di</div>
<div class="a t" style="right:1067px;top:655px;font-size:12px;line-height:14px;font-weight:bold;color:#a00000;">Appartenenza</div>
<div class="a" style="left:133px;top:646px;width:268px;height:19px;background:#fff;border-top:2px solid #6d6d6d;border-left:2px solid #6d6d6d;border-right:1px solid #d8d8d8;border-bottom:1px solid #d8d8d8"></div>
<div class="a" style="left:386px;top:648px;width:15px;height:16px;background:#f0f0f0;border-top:1px solid #fff;border-left:1px solid #fff;border-right:1px solid #696969;border-bottom:1px solid #696969;box-shadow:inset -1px -1px 0 #a0a0a0;"></div>
<svg class="a" style="left:390px;top:655px" width="9" height="5" viewBox="0 0 9 5"><path d="M0 0 L9 0 L4.5 4.5Z" fill="#909090"/></svg>
<div class="a t" style="left:137px;top:650px;font-size:11.8px;line-height:14px;font-weight:normal;color:#808080;font-family:'Liberation Mono',monospace;">AM - SOCIETA' DEMO S.R.L.</div>
<div class="a t" style="left:467px;top:622px;font-size:12px;line-height:14px;font-weight:bold;color:#a00000;">Data Associazione</div>
<div class="a t" style="left:478px;top:642px;font-size:12px;line-height:14px;font-weight:bold;color:#000;">Data di</div>
<div class="a" style="left:22px;top:746px;width:700px;height:1px;background:#8a8a8a"></div>
<div class="a" style="left:22px;top:747px;width:700px;height:1px;background:#fff"></div>
<div class="a" style="left:22px;top:797px;width:700px;height:1px;background:#fff"></div>
<div class="a" style="left:26px;top:753px;width:49px;height:38px;background:#f0f0f0;border-top:1px solid #8a8a8a;border-left:1px solid #8a8a8a;border-right:2px solid #6a6a6a;border-bottom:2px solid #6a6a6a;box-shadow:inset 1px 1px 0 #fff;"></div>
<div class="a" style="left:78px;top:753px;width:47px;height:38px;background:#f0f0f0;border-top:1px solid #8a8a8a;border-left:1px solid #8a8a8a;border-right:2px solid #6a6a6a;border-bottom:2px solid #6a6a6a;box-shadow:inset 1px 1px 0 #fff;"></div>
<div class="a" style="left:128px;top:753px;width:46px;height:38px;background:#f0f0f0;border-top:1px solid #8a8a8a;border-left:1px solid #8a8a8a;border-right:2px solid #6a6a6a;border-bottom:2px solid #6a6a6a;box-shadow:inset 1px 1px 0 #fff;"></div>
<div class="a" style="left:177px;top:753px;width:48px;height:38px;background:#f0f0f0;border-top:1px solid #8a8a8a;border-left:1px solid #8a8a8a;border-right:2px solid #6a6a6a;border-bottom:2px solid #6a6a6a;box-shadow:inset 1px 1px 0 #fff;"></div>
<div class="a" style="left:228px;top:753px;width:105px;height:38px;background:#f0f0f0;border-top:1px solid #8a8a8a;border-left:1px solid #8a8a8a;border-right:2px solid #6a6a6a;border-bottom:2px solid #6a6a6a;box-shadow:inset 1px 1px 0 #fff;"></div>
<div class="a" style="left:336px;top:753px;width:129px;height:38px;background:#f0f0f0;border-top:1px solid #8a8a8a;border-left:1px solid #8a8a8a;border-right:2px solid #6a6a6a;border-bottom:2px solid #6a6a6a;box-shadow:inset 1px 1px 0 #fff;"></div>
<div class="a" style="left:468px;top:753px;width:47px;height:38px;background:#f0f0f0;border-top:1px solid #8a8a8a;border-left:1px solid #8a8a8a;border-right:2px solid #6a6a6a;border-bottom:2px solid #6a6a6a;box-shadow:inset 1px 1px 0 #fff;"></div>
<div class="a" style="left:518px;top:753px;width:79px;height:38px;background:#f0f0f0;border-top:1px solid #8a8a8a;border-left:1px solid #8a8a8a;border-right:2px solid #6a6a6a;border-bottom:2px solid #6a6a6a;box-shadow:inset 1px 1px 0 #fff;"></div>
<svg class="a" style="left:35px;top:757px" width="36" height="32" viewBox="0 0 36 32"><path d="M11 5 L17 4.5 L17 26 L11 27Z" fill="#111"/><path d="M1.5 7 L13 5 L13 31 L1.5 27Z" fill="#c4a468" stroke="#111" stroke-width="1.2"/><path d="M3.5 9 L6.5 8.5 L6.5 16 L3.5 16.3Z M8 8.2 L11 7.7 L11 15.8 L8 16Z M3.5 18 L6.5 18 L6.5 25 L3.5 24.5Z M8 18 L11 18 L11 26 L8 25.5Z" fill="#a88848"/><rect x="10.5" y="17" width="1.5" height="2" fill="#f0e020"/><path d="M15.5 16.5 L20 12.5 V14.5 H26.5 V18.5 H20 V20.5Z" fill="#8aa4bc" stroke="#222" stroke-width=".8"/><text x="18" y="8.8" font-family="Liberation Sans" font-weight="bold" font-size="10.5" textLength="14.5" lengthAdjust="spacingAndGlyphs" fill="#000">ESC</text></svg>
<svg class="a" style="left:86px;top:757px" width="32" height="32" viewBox="0 0 32 32"><path d="M2.5 1 H28 L30.5 3.5 V29 L28.5 31 H3 L1 29 V2.5Z" fill="#8c8a1c" stroke="#111" stroke-width="1.3"/><rect x="5" y="2" width="21" height="14.5" fill="#fff" stroke="#111" stroke-width="1"/><rect x="27" y="3" width="1.5" height="4" fill="#111"/><text x="6.2" y="14" font-family="Liberation Sans" font-weight="bold" font-size="13.5" textLength="18.5" lengthAdjust="spacingAndGlyphs" fill="#000">F10</text><rect x="8.5" y="21" width="15" height="10" fill="#333"/><rect x="11.5" y="23.5" width="3" height="5" fill="#e8e8e8"/><rect x="19" y="22" width="3.5" height="9" fill="#c8c8c8"/></svg>
<svg class="a" style="left:137px;top:757px" width="32" height="32" viewBox="0 0 32 32"><defs><linearGradient id="rb" x1="0" x2="1"><stop offset="0" stop-color="#c0c8e0"/><stop offset=".5" stop-color="#f4f6fa"/><stop offset="1" stop-color="#a8b0c8"/></linearGradient></defs><path d="M4 5 L28 5 L26 30 C20 32 12 32 6 30Z" fill="url(#rb)" stroke="#8890b0"/><ellipse cx="16" cy="5" rx="12" ry="3.5" fill="#6a7898" stroke="#8890b0"/><path d="M9 4 L14 2 L18 6 L23 3" stroke="#e0e0e0" stroke-width="1.5" fill="none"/><path d="M10 17 C11 12 19 11 21 15" stroke="#3878d8" stroke-width="2.5" fill="none"/><path d="M22 20 C21 25 13 26 11 22" stroke="#3878d8" stroke-width="2.5" fill="none"/></svg>
<svg class="a" style="left:186px;top:758px" width="32" height="30" viewBox="0 0 32 30"><path d="M3 6 L24 6 L29 9 L29 27 L3 25Z" fill="#dcdcdc" stroke="#909090"/><rect x="5" y="3" width="6" height="3" fill="#c8c8c8" stroke="#909090" stroke-width=".5"/><circle cx="12" cy="16" r="6.5" fill="#a0a0a0" stroke="#707070"/><circle cx="12" cy="16" r="4" fill="#4a78b8"/><circle cx="11" cy="15" r="1.5" fill="#c0d8f0"/><rect x="22" y="11" width="4" height="12" fill="#202020"/></svg>
<svg class="a" style="left:235px;top:757px" width="38" height="34" viewBox="0 0 38 34"><path d="M3 3 L22 1 L24 30 L5 33Z" fill="#1850a8" stroke="#0a2a70"/><path d="M6 6 L20 4.5 L21.5 27.5 L7.5 29.5Z" fill="#cfe0f4"/><path d="M9 17 L12 22 L19 9" stroke="#d8a020" stroke-width="1.8" fill="none"/><path d="M16 25 L33 15" stroke="#2860b0" stroke-width="4"/><path d="M31 16 L35 13.5" stroke="#e04040" stroke-width="4"/></svg>
<div class="a t" style="left:275px;top:759px;font-size:12px;line-height:14px;font-weight:bold;color:#000;">F4 -&gt;</div>
<div class="a t" style="left:275px;top:772px;font-size:12px;line-height:14px;font-weight:bold;color:#000;">Tariffario</div>
<svg class="a" style="left:343px;top:757px" width="36" height="34" viewBox="0 0 36 34"><path d="M1 9 L12 9 L14 12 L30 12 L30 30 L3 32Z" fill="#e8a838" stroke="#c04020"/><circle cx="20" cy="10" r="8" fill="#d8dce4" stroke="#8090a8" stroke-width="1.5"/><path d="M20 5 V10 L16 13" stroke="#304060" stroke-width="1.5" fill="none"/><path d="M2 16 L34 16 L29 32 L3 32Z" fill="#f8d878" stroke="#c04020" stroke-width=".8"/></svg>
<div class="a t" style="left:383px;top:759px;font-size:12px;line-height:14px;font-weight:bold;color:#000;">F5 -&gt; Modelli</div>
<div class="a t" style="left:383px;top:772px;font-size:12px;line-height:14px;font-weight:bold;color:#000;">Ore Lavorate</div>
<div class="a t" style="left:475px;top:756px;font-size:12px;line-height:14px;font-weight:bold;color:#000;">F6</div>
<svg class="a" style="left:478px;top:763px" width="36" height="28" viewBox="0 0 36 28"><rect x="10" y="1" width="23" height="26" fill="#f8f4e0" stroke="#7088b0"/><rect x="10" y="1" width="23" height="4" fill="#5078c0"/><path d="M2 10 H10 M2 16 H10 M2 22 H10" stroke="#b0a880" stroke-width="3" opacity=".5"/><rect x="16" y="8" width="14" height="4" fill="#fff" stroke="#6080c0" stroke-width=".8"/><rect x="16" y="14" width="14" height="4" fill="#fff" stroke="#6080c0" stroke-width=".8"/><rect x="16" y="20" width="14" height="4" fill="#fff" stroke="#6080c0" stroke-width=".8"/></svg>
<div class="a" style="left:524px;top:326px;width:626px;height:683px;background:#f0f0f0;box-shadow:0 0 14px rgba(0,0,0,.5)"></div>
<div class="a" style="left:523px;top:326px;width:1px;height:683px;background:#707070"></div>
<div class="a" style="left:524px;top:326px;width:625px;height:26px;background:#fff"></div>
<div class="a t" style="left:527px;top:331px;font-size:11.6px;line-height:14px;font-weight:normal;color:#000;">Stampa Anagrafica Soci</div>
<div class="a" style="left:528px;top:355px;width:615px;height:559px;border:1px solid #a0a0a0;box-shadow:inset 1px 1px 0 #fff,1px 1px 0 #fff;"></div>
<div class="a" style="left:535px;top:362px;width:602px;height:490px;border:1px solid #a0a0a0;box-shadow:inset 1px 1px 0 #fff,1px 1px 0 #fff;"></div>
<div class="a" style="left:539px;top:366px;width:580px;height:483px;background:#fff"></div>
<div class="a" style="left:539px;top:366px;width:543px;height:19px;background:#3b6ca5;border-top:1px solid #2c5488"></div>
<div class="a" style="left:1083px;top:366px;width:36px;height:19px;background:#3b6ca5;border-top:1px solid #2c5488"></div>
<div class="a t" style="left:510px;width:600px;text-align:center;top:368px;font-size:14px;line-height:17px;font-weight:normal;color:#fff;letter-spacing:0.9px;word-spacing:4px;">STAMPA SCHEDA</div>
<div class="a" style="left:539px;top:385px;width:543px;height:16px;background:#e0ffe0;border-bottom:1px solid #c8bcbc"></div>
<div class="a" style="left:1083px;top:385px;width:36px;height:16px;background:#e0ffe0;border-bottom:1px solid #c8bcbc"></div>
<div class="a t" style="left:543px;top:386px;font-size:12px;line-height:14px;font-weight:bold;color:#000;">Stampa Scheda</div>
<div class="a" style="left:1094px;top:387px;width:11px;height:11px;background:#fff;border:1px solid #333"></div>
<div class="a" style="left:539px;top:402px;width:543px;height:15px;background:#fff;"></div>
<div class="a" style="left:1083px;top:402px;width:36px;height:15px;background:#fff;"></div>
<div class="a" style="left:539px;top:417px;width:543px;height:18px;background:#3b6ca5;border-top:1px solid #2c5488"></div>
<div class="a" style="left:1083px;top:417px;width:36px;height:18px;background:#3b6ca5;border-top:1px solid #2c5488"></div>
<div class="a t" style="left:510px;width:600px;text-align:center;top:418px;font-size:14px;line-height:17px;font-weight:normal;color:#fff;letter-spacing:0.9px;word-spacing:4px;">STAMPA BADGE</div>
<div class="a" style="left:539px;top:435px;width:543px;height:16px;background:#ffffd8;border-bottom:1px solid #c8bcbc"></div>
<div class="a" style="left:1083px;top:435px;width:36px;height:16px;background:#ffffd8;border-bottom:1px solid #c8bcbc"></div>
<div class="a t" style="left:543px;top:436px;font-size:12px;line-height:14px;font-weight:bold;color:#000;">Stampa Badge</div>
<div class="a" style="left:1094px;top:437px;width:11px;height:11px;background:#fff;border:1px solid #333"></div>
<div class="a" style="left:539px;top:452px;width:543px;height:15px;background:#ffffd8;border-bottom:1px solid #c8bcbc"></div>
<div class="a" style="left:1083px;top:452px;width:36px;height:15px;background:#ffffd8;border-bottom:1px solid #c8bcbc"></div>
<div class="a t" style="left:543px;top:452px;font-size:12px;line-height:14px;font-weight:bold;color:#000;">Stampa Badge per App "Geo Badge"</div>
<div class="a" style="left:1094px;top:453px;width:11px;height:11px;background:#fff;border:1px solid #333"></div>
<div class="a" style="left:539px;top:468px;width:543px;height:15px;background:#fff;"></div>
<div class="a" style="left:1083px;top:468px;width:36px;height:15px;background:#fff;"></div>
<div class="a" style="left:539px;top:483px;width:543px;height:18px;background:#3b6ca5;border-top:1px solid #2c5488"></div>
<div class="a" style="left:1083px;top:483px;width:36px;height:18px;background:#3b6ca5;border-top:1px solid #2c5488"></div>
<div class="a t" style="left:510px;width:600px;text-align:center;top:484px;font-size:14px;line-height:17px;font-weight:normal;color:#000;letter-spacing:0.9px;word-spacing:4px;">STAMPA MODULISTICA</div>
<div class="a" style="left:539px;top:501px;width:580px;height:348px;overflow:hidden;background:#ffe0e0">
<div class="a" style="left:0;top:1px;width:543px;height:17px;background:#ffe0e0;border-bottom:1px solid #c8bcbc"></div>
<div class="a" style="left:544px;top:1px;width:36px;height:17px;background:#ffe0e0;border-bottom:1px solid #c8bcbc"></div>
<div class="a t" style="left:4px;top:3px;font-size:11.9px;line-height:14px;font-weight:bold;color:#3a5f98">Carta intestata e timbro della societa' per altre comunicazioni</div>
<div class="a" style="left:555px;top:3px;width:11px;height:11px;background:#fff;border:1px solid #333"></div>
<div class="a" style="left:0;top:19px;width:543px;height:17px;background:#ffe0e0;border-bottom:1px solid #c8bcbc"></div>
<div class="a" style="left:544px;top:19px;width:36px;height:17px;background:#ffe0e0;border-bottom:1px solid #c8bcbc"></div>
<div class="a t" style="left:4px;top:21px;font-size:11.9px;line-height:14px;font-weight:bold;color:#3a5f98">Informativa privacy D.Lgs. 30/06/2003 N. 196 [old]</div>
<div class="a" style="left:555px;top:21px;width:11px;height:11px;background:#fff;border:1px solid #333"></div>
<div class="a" style="left:0;top:37px;width:543px;height:17px;background:#ffe0e0;border-bottom:1px solid #c8bcbc"></div>
<div class="a" style="left:544px;top:37px;width:36px;height:17px;background:#ffe0e0;border-bottom:1px solid #c8bcbc"></div>
<div class="a t" style="left:4px;top:39px;font-size:11.9px;line-height:14px;font-weight:bold;color:#3a5f98">Informativa per la dichiarazione di assenza condanne penali su carta intestata</div>
<div class="a" style="left:555px;top:39px;width:11px;height:11px;background:#fff;border:1px solid #333"></div>
<div class="a" style="left:0;top:55px;width:543px;height:17px;background:#ffe0e0;border-bottom:1px solid #c8bcbc"></div>
<div class="a" style="left:544px;top:55px;width:36px;height:17px;background:#ffe0e0;border-bottom:1px solid #c8bcbc"></div>
<div class="a t" style="left:4px;top:57px;font-size:11.9px;line-height:14px;font-weight:bold;color:#3a5f98">Informativa per la dichiarazione di assenza condanne penali su carta non intestata</div>
<div class="a" style="left:555px;top:57px;width:11px;height:11px;background:#fff;border:1px solid #333"></div>
<div class="a" style="left:0;top:73px;width:543px;height:17px;background:#ffe0e0;border-bottom:1px solid #c8bcbc"></div>
<div class="a" style="left:544px;top:73px;width:36px;height:17px;background:#ffe0e0;border-bottom:1px solid #c8bcbc"></div>
<div class="a t" style="left:4px;top:75px;font-size:11.9px;line-height:14px;font-weight:bold;color:#3a5f98">Informativa per la dichiarazione di corretto rumore in cantiere</div>
<div class="a" style="left:555px;top:75px;width:11px;height:11px;background:#fff;border:1px solid #333"></div>
<div class="a" style="left:0;top:91px;width:543px;height:17px;background:#ffe0e0;border-bottom:1px solid #c8bcbc"></div>
<div class="a" style="left:544px;top:91px;width:36px;height:17px;background:#ffe0e0;border-bottom:1px solid #c8bcbc"></div>
<div class="a t" style="left:4px;top:93px;font-size:11.9px;line-height:14px;font-weight:bold;color:#3a5f98">Informativa sulla maternita'</div>
<div class="a" style="left:555px;top:93px;width:11px;height:11px;background:#fff;border:1px solid #333"></div>
<div class="a" style="left:0;top:109px;width:543px;height:17px;background:#ffe0e0;border-bottom:1px solid #c8bcbc"></div>
<div class="a" style="left:544px;top:109px;width:36px;height:17px;background:#ffe0e0;border-bottom:1px solid #c8bcbc"></div>
<div class="a t" style="left:4px;top:111px;font-size:11.9px;line-height:14px;font-weight:bold;color:#3a5f98">Lettera di certificazione coordinate bancarie (IBAN) - Documento compilato</div>
<div class="a" style="left:555px;top:111px;width:11px;height:11px;background:#fff;border:1px solid #333"></div>
<div class="a" style="left:0;top:127px;width:543px;height:17px;background:#ffe0e0;border-bottom:1px solid #c8bcbc"></div>
<div class="a" style="left:544px;top:127px;width:36px;height:17px;background:#ffe0e0;border-bottom:1px solid #c8bcbc"></div>
<div class="a t" style="left:4px;top:129px;font-size:11.9px;line-height:14px;font-weight:bold;color:#3a5f98">Lettera di richiesta coordinate bancarie (IBAN) - Manca la compilazione delle coordinate</div>
<div class="a" style="left:555px;top:129px;width:11px;height:11px;background:#fff;border:1px solid #333"></div>
<div class="a" style="left:0;top:145px;width:543px;height:17px;background:#ffe0e0;border-bottom:1px solid #c8bcbc"></div>
<div class="a" style="left:544px;top:145px;width:36px;height:17px;background:#ffe0e0;border-bottom:1px solid #c8bcbc"></div>
<div class="a t" style="left:4px;top:147px;font-size:11.9px;line-height:14px;font-weight:bold;color:#3a5f98">Lettera di richiesta coordinate bancarie (IBAN) - Documento vuoto</div>
<div class="a" style="left:555px;top:147px;width:11px;height:11px;background:#fff;border:1px solid #333"></div>
<div class="a" style="left:0;top:163px;width:543px;height:17px;background:#ffe0e0;border-bottom:1px solid #c8bcbc"></div>
<div class="a" style="left:544px;top:163px;width:36px;height:17px;background:#ffe0e0;border-bottom:1px solid #c8bcbc"></div>
<div class="a t" style="left:4px;top:165px;font-size:11.9px;line-height:14px;font-weight:bold;color:#3a5f98">Documento cartella sanitaria e di rischio per visite mediche</div>
<div class="a" style="left:555px;top:165px;width:11px;height:11px;background:#fff;border:1px solid #333"></div>
<div class="a" style="left:0;top:181px;width:543px;height:17px;background:#ffe0e0;border-bottom:1px solid #c8bcbc"></div>
<div class="a" style="left:544px;top:181px;width:36px;height:17px;background:#ffe0e0;border-bottom:1px solid #c8bcbc"></div>
<div class="a t" style="left:4px;top:183px;font-size:11.9px;line-height:14px;font-weight:bold;color:#3a5f98">Documento scheda completa lavoratore per ufficio paghe</div>
<div class="a" style="left:555px;top:183px;width:11px;height:11px;background:#fff;border:1px solid #333"></div>
<div class="a" style="left:0;top:199px;width:543px;height:17px;background:#ffe0e0;border-bottom:1px solid #c8bcbc"></div>
<div class="a" style="left:544px;top:199px;width:36px;height:17px;background:#ffe0e0;border-bottom:1px solid #c8bcbc"></div>
<div class="a t" style="left:4px;top:201px;font-size:11.9px;line-height:14px;font-weight:bold;color:#3a5f98">Documento di consegna badge/tesserino di riconoscimento</div>
<div class="a" style="left:555px;top:201px;width:11px;height:11px;background:#fff;border:1px solid #333"></div>
<div class="a" style="left:0;top:217px;width:543px;height:17px;background:#ffe0e0;border-bottom:1px solid #c8bcbc"></div>
<div class="a" style="left:544px;top:217px;width:36px;height:17px;background:#ffe0e0;border-bottom:1px solid #c8bcbc"></div>
<div class="a t" style="left:4px;top:219px;font-size:11.9px;line-height:14px;font-weight:bold;color:#3a5f98">Documento di consegna nome utente e password app Geo Badge rilevazione presenze</div>
<div class="a" style="left:555px;top:219px;width:11px;height:11px;background:#fff;border:1px solid #333"></div>
<div class="a" style="left:0;top:235px;width:543px;height:17px;background:#ffe0e0;border-bottom:1px solid #c8bcbc"></div>
<div class="a" style="left:544px;top:235px;width:36px;height:17px;background:#ffe0e0;border-bottom:1px solid #c8bcbc"></div>
<div class="a t" style="left:4px;top:237px;font-size:11.9px;line-height:14px;font-weight:bold;color:#3a5f98">Documento e attestato di partecipazione al corso di formazione</div>
<div class="a" style="left:555px;top:237px;width:11px;height:11px;background:#fff;border:1px solid #333"></div>
<div class="a" style="left:0;top:253px;width:543px;height:17px;background:#ffe0e0;border-bottom:1px solid #c8bcbc"></div>
<div class="a" style="left:544px;top:253px;width:36px;height:17px;background:#ffe0e0;border-bottom:1px solid #c8bcbc"></div>
<div class="a t" style="left:4px;top:255px;font-size:11.9px;line-height:14px;font-weight:bold;color:#3a5f98">Documento di consegna dispositivi di protezione - Layout 1</div>
<div class="a" style="left:555px;top:255px;width:11px;height:11px;background:#fff;border:1px solid #333"></div>
<div class="a" style="left:0;top:271px;width:543px;height:17px;background:#ffe0e0;border-bottom:1px solid #c8bcbc"></div>
<div class="a" style="left:544px;top:271px;width:36px;height:17px;background:#ffe0e0;border-bottom:1px solid #c8bcbc"></div>
<div class="a t" style="left:4px;top:273px;font-size:11.9px;line-height:14px;font-weight:bold;color:#3a5f98">Documento di consegna dispositivi di protezione - Layout 2</div>
<div class="a" style="left:555px;top:273px;width:11px;height:11px;background:#fff;border:1px solid #333"></div>
<div class="a" style="left:0;top:289px;width:543px;height:17px;background:#ffe0e0;border-bottom:1px solid #c8bcbc"></div>
<div class="a" style="left:544px;top:289px;width:36px;height:17px;background:#ffe0e0;border-bottom:1px solid #c8bcbc"></div>
<div class="a t" style="left:4px;top:291px;font-size:11.9px;line-height:14px;font-weight:bold;color:#3a5f98">Documento di consegna dispositivi di protezione - Layout 3</div>
<div class="a" style="left:555px;top:291px;width:11px;height:11px;background:#fff;border:1px solid #333"></div>
<div class="a" style="left:0;top:307px;width:543px;height:17px;background:#ffe0e0;border-bottom:1px solid #c8bcbc"></div>
<div class="a" style="left:544px;top:307px;width:36px;height:17px;background:#ffe0e0;border-bottom:1px solid #c8bcbc"></div>
<div class="a t" style="left:4px;top:309px;font-size:11.9px;line-height:14px;font-weight:bold;color:#3a5f98">Documento di consegna dispositivi di protezione - Layout 4</div>
<div class="a" style="left:555px;top:309px;width:11px;height:11px;background:#fff;border:1px solid #333"></div>
<div class="a" style="left:0;top:325px;width:543px;height:17px;background:#ffe0e0;border-bottom:1px solid #c8bcbc"></div>
<div class="a" style="left:544px;top:325px;width:36px;height:17px;background:#ffe0e0;border-bottom:1px solid #c8bcbc"></div>
<div class="a t" style="left:4px;top:327px;font-size:11.9px;line-height:14px;font-weight:bold;color:#3a5f98">Documento di consegna dispositivi di protezione - Movimenti di magazzino</div>
<div class="a" style="left:555px;top:327px;width:11px;height:11px;background:#fff;border:1px solid #333"></div>
<div class="a" style="left:0;top:343px;width:543px;height:17px;background:#ffe0e0;border-bottom:1px solid #c8bcbc"></div>
<div class="a" style="left:544px;top:343px;width:36px;height:17px;background:#ffe0e0;border-bottom:1px solid #c8bcbc"></div>
<div class="a t" style="left:4px;top:345px;font-size:11.9px;line-height:14px;font-weight:bold;color:#3a5f98">Documento di consegna dispositivi di protezione - Layout 5</div>
<div class="a" style="left:555px;top:345px;width:11px;height:11px;background:#fff;border:1px solid #333"></div>
</div>
<div class="a" style="left:1082px;top:366px;width:1px;height:483px;background:#b8b8b8"></div>
<div class="a" style="left:539px;top:365px;width:596px;height:484px;border:1px solid #585868;border-right-color:#4a5068;"></div>
<div class="a" style="left:1119px;top:366px;width:17px;height:483px;background:#7898c4;border-left:1px solid #4a5068;border-right:1px solid #4a5068;box-sizing:border-box"></div>
<div class="a" style="left:1120px;top:366px;width:15px;height:17px;background:linear-gradient(90deg,#d4e4f8 50%,#c0d4f0 50%);border-bottom:1px solid #4a5068;box-sizing:border-box"></div>
<svg class="a" style="left:1122px;top:371px" width="11" height="7" viewBox="0 0 11 7"><path d="M0 6 L5.5 0 L11 6Z" fill="#303860"/></svg>
<div class="a" style="left:1120px;top:383px;width:15px;height:129px;background:linear-gradient(90deg,#d4e4f8 50%,#c0d4f0 50%);border-bottom:1px solid #4a5068;box-sizing:border-box"></div>
<div class="a" style="left:1120px;top:832px;width:15px;height:17px;background:linear-gradient(90deg,#d4e4f8 50%,#c0d4f0 50%);border-top:1px solid #4a5068;box-sizing:border-box"></div>
<svg class="a" style="left:1122px;top:838px" width="11" height="7" viewBox="0 0 11 7"><path d="M0 0 L5.5 6 L11 0Z" fill="#303860"/></svg>
<div class="a" style="left:535px;top:866px;width:571px;height:35px;border:1px solid #a0a0a0;box-shadow:inset 1px 1px 0 #fff,1px 1px 0 #fff;"></div>
<div class="a" style="left:542px;top:860px;width:70px;height:12px;background:#f0f0f0"></div>
<div class="a t" style="left:545px;top:858px;font-size:12px;line-height:14px;font-weight:bold;color:#1a5a9a;">Stampa su</div>
<svg class="a" style="left:557px;top:882px" width="12" height="12" viewBox="0 0 12 12"><circle cx="6" cy="6" r="5.5" fill="#fff" stroke="#8a8a8a"/><path d="M1.5 9 A5.5 5.5 0 0 1 9 1.5" stroke="#606060" fill="none"/><circle cx="6" cy="6" r="2" fill="#000"/></svg>
<div class="a t" style="left:575px;top:882px;font-size:12px;line-height:14px;font-weight:bold;color:#000;">Stampante Laser</div>
<svg class="a" style="left:713px;top:882px" width="12" height="12" viewBox="0 0 12 12"><circle cx="6" cy="6" r="5.5" fill="#fff" stroke="#8a8a8a"/><path d="M1.5 9 A5.5 5.5 0 0 1 9 1.5" stroke="#606060" fill="none"/></svg>
<div class="a t" style="left:731px;top:882px;font-size:12px;line-height:14px;font-weight:bold;color:#000;">Esporta in File</div>
<svg class="a" style="left:849px;top:882px" width="12" height="12" viewBox="0 0 12 12"><circle cx="6" cy="6" r="5.5" fill="#fff" stroke="#8a8a8a"/><path d="M1.5 9 A5.5 5.5 0 0 1 9 1.5" stroke="#606060" fill="none"/></svg>
<div class="a t" style="left:867px;top:882px;font-size:12px;line-height:14px;font-weight:bold;color:#000;">Archivio Office</div>
<svg class="a" style="left:986px;top:882px" width="12" height="12" viewBox="0 0 12 12"><circle cx="6" cy="6" r="5.5" fill="#fff" stroke="#8a8a8a"/><path d="M1.5 9 A5.5 5.5 0 0 1 9 1.5" stroke="#606060" fill="none"/></svg>
<div class="a t" style="left:1005px;top:882px;font-size:12px;line-height:14px;font-weight:bold;color:#000;">Uscita a Video</div>
<div class="a" style="left:1117px;top:862px;width:21px;height:19px;background:#f0f0f0;border-top:1px solid #fff;border-left:1px solid #fff;border-right:1px solid #696969;border-bottom:1px solid #696969;box-shadow:inset -1px -1px 0 #a0a0a0;"></div>
<div class="a" style="left:1117px;top:883px;width:21px;height:20px;background:#f0f0f0;border-top:1px solid #fff;border-left:1px solid #fff;border-right:1px solid #696969;border-bottom:1px solid #696969;box-shadow:inset -1px -1px 0 #a0a0a0;"></div>
<svg class="a" style="left:1119px;top:864px" width="19" height="17" viewBox="0 0 19 17"><path d="M9.5 0 L19 16 L0 16Z" fill="#20a020"/><path d="M9.5 2 L15 12 L4 12Z" fill="#50d050"/></svg>
<svg class="a" style="left:1119px;top:886px" width="19" height="17" viewBox="0 0 19 17"><path d="M0 0 L19 0 L9.5 16Z" fill="#20a020"/><path d="M4 3 L15 3 L9.5 13Z" fill="#50d050"/></svg>
<div class="a" style="left:528px;top:919px;width:454px;height:85px;border:1px solid #a0a0a0;box-shadow:inset 1px 1px 0 #fff,1px 1px 0 #fff;"></div>
<div class="a" style="left:540px;top:934px;width:433px;height:60px;border:1px solid #a0a0a0;box-shadow:inset 1px 1px 0 #fff,1px 1px 0 #fff;"></div>
<div class="a" style="left:548px;top:926px;width:112px;height:14px;background:#f0f0f0"></div>
<div class="a t" style="left:551px;top:926px;font-size:12px;line-height:14px;font-weight:bold;color:#1a5a9a;">Stato della Stampa</div>
<div class="a t" style="right:578px;top:953px;font-size:12px;line-height:14px;font-weight:bold;color:#000;">Codice</div>
<div class="a" style="left:619px;top:951px;width:190px;height:15px;background:#c0c0c0;border-top:1px solid #808080;box-sizing:border-box"></div>
<div class="a t" style="right:318px;top:953px;font-size:12px;line-height:14px;font-weight:bold;color:#000;">Elaborati</div>
<div class="a" style="left:879px;top:951px;width:80px;height:15px;background:#c0c0c0;border-top:1px solid #808080;box-sizing:border-box"></div>
<div class="a t" style="right:578px;top:973px;font-size:12px;line-height:14px;font-weight:bold;color:#000;">Descrizione</div>
<div class="a" style="left:619px;top:971px;width:340px;height:15px;background:#c0c0c0;border-top:1px solid #808080;box-sizing:border-box"></div>
<div class="a" style="left:987px;top:919px;width:159px;height:85px;border:1px solid #a0a0a0;box-shadow:inset 1px 1px 0 #fff,1px 1px 0 #fff;"></div>
<div class="a" style="left:993px;top:921px;width:47px;height:38px;background:#f0f0f0;border-top:1px solid #8a8a8a;border-left:1px solid #8a8a8a;border-right:2px solid #6a6a6a;border-bottom:2px solid #6a6a6a;box-shadow:inset 1px 1px 0 #fff;"></div>
<div class="a" style="left:1043px;top:921px;width:47px;height:38px;background:#f0f0f0;border-top:1px solid #8a8a8a;border-left:1px solid #8a8a8a;border-right:2px solid #6a6a6a;border-bottom:2px solid #6a6a6a;box-shadow:inset 1px 1px 0 #fff;"></div>
<div class="a" style="left:1093px;top:921px;width:47px;height:38px;background:#f0f0f0;border-top:1px solid #8a8a8a;border-left:1px solid #8a8a8a;border-right:2px solid #6a6a6a;border-bottom:2px solid #6a6a6a;box-shadow:inset 1px 1px 0 #fff;"></div>
<div class="a" style="left:993px;top:961px;width:147px;height:38px;background:#f0f0f0;border-top:1px solid #8a8a8a;border-left:1px solid #8a8a8a;border-right:2px solid #6a6a6a;border-bottom:2px solid #6a6a6a;box-shadow:inset 1px 1px 0 #fff;"></div>
<svg class="a" style="left:1001px;top:925px" width="36" height="32" viewBox="0 0 36 32"><path d="M11 5 L17 4.5 L17 26 L11 27Z" fill="#111"/><path d="M1.5 7 L13 5 L13 31 L1.5 27Z" fill="#c4a468" stroke="#111" stroke-width="1.2"/><path d="M3.5 9 L6.5 8.5 L6.5 16 L3.5 16.3Z M8 8.2 L11 7.7 L11 15.8 L8 16Z M3.5 18 L6.5 18 L6.5 25 L3.5 24.5Z M8 18 L11 18 L11 26 L8 25.5Z" fill="#a88848"/><rect x="10.5" y="17" width="1.5" height="2" fill="#f0e020"/><path d="M15.5 16.5 L20 12.5 V14.5 H26.5 V18.5 H20 V20.5Z" fill="#8aa4bc" stroke="#222" stroke-width=".8"/><text x="18" y="8.8" font-family="Liberation Sans" font-weight="bold" font-size="10.5" textLength="14.5" lengthAdjust="spacingAndGlyphs" fill="#000">ESC</text></svg>
<svg class="a" style="left:1050px;top:924px" width="38" height="36" viewBox="0 0 38 36"><defs><linearGradient id="pr" x1="0" y1="0" x2="0" y2="1"><stop offset="0" stop-color="#f8f8f8"/><stop offset="1" stop-color="#a8a8a8"/></linearGradient></defs><path d="M5 3 L15 1 L20 14 L9 16Z" fill="#d8ecfc" stroke="#7aa0c8" stroke-width=".8"/><path d="M2 16 C2 13 5 12 8 12 L26 12 C29 12 31 14 31 17 L31 27 L2 27Z" fill="url(#pr)" stroke="#808080" stroke-width=".8"/><rect x="5" y="15" width="22" height="3" fill="#fff" stroke="#b0b0b0" stroke-width=".5"/><rect x="6" y="27" width="21" height="5" fill="#d0d0d0" stroke="#808080" stroke-width=".7"/><rect x="24" y="20" width="3" height="2" fill="#40b040"/><text x="21" y="10" font-family="Liberation Sans" font-weight="bold" font-size="10.5" textLength="11" lengthAdjust="spacingAndGlyphs" fill="#000">F7</text></svg>
<svg class="a" style="left:1100px;top:924px" width="38" height="36" viewBox="0 0 38 36"><path d="M6 27 L13 32 L18 29 L10 24Z" fill="#404040"/><path d="M3 12 L16 4 L27 21 L14 32Z" fill="#f4f4f4" stroke="#202020" stroke-width="1.1"/><path d="M12 14 C9 17 11 22 15 22" stroke="#b0b0b0" stroke-width="2" fill="none"/><path d="M15 21 L29 7" stroke="#c8d830" stroke-width="4.5"/><path d="M15 21 L29 7" stroke="#e8f060" stroke-width="1.5"/><path d="M28 8 L32 4" stroke="#e83838" stroke-width="4.5" stroke-linecap="round"/><path d="M15 21 L13 23.5" stroke="#303030" stroke-width="2"/></svg>
<svg class="a" style="left:1051px;top:963px" width="34" height="36" viewBox="0 0 34 36"><defs><radialGradient id="hg" cx=".4" cy=".3" r=".7"><stop offset="0" stop-color="#ffffff"/><stop offset=".6" stop-color="#a8d4f4"/><stop offset="1" stop-color="#4890d0"/></radialGradient></defs><path d="M17 2 C7 2 1 8 1 15 C1 22 7 27 14 28 L18 34 L20 28 C27 27 33 22 33 15 C33 8 27 2 17 2Z" fill="url(#hg)" stroke="#3878c0"/><text x="10" y="24" font-family="Liberation Serif" font-weight="bold" font-size="21" fill="#10307a">?</text></svg>
</div></body></html>
